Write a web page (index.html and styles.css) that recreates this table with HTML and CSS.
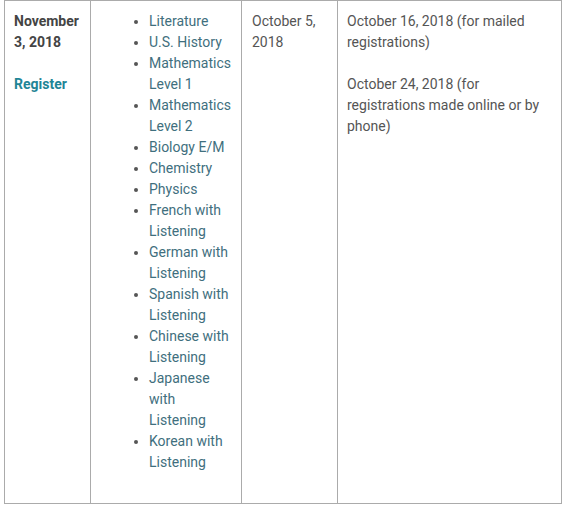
FILE: index.html
```html
<!DOCTYPE html>
<html>
<head>
<meta charset="utf-8">
<link rel="stylesheet" href="styles.css">
</head>
<body>
<table class="schedule">
  <colgroup>
    <col class="c1"><col class="c2"><col class="c3"><col class="c4">
  </colgroup>
  <tr>
    <td class="first">
      <p class="date">November 3, 2018</p>
      <p><a class="reg" href="#">Register</a></p>
    </td>
    <td>
      <ul class="tests">
        <li>Literature</li>
        <li>U.S. History</li>
        <li>Mathematics Level 1</li>
        <li>Mathematics Level 2</li>
        <li>Biology E/M</li>
        <li>Chemistry</li>
        <li>Physics</li>
        <li>French with Listening</li>
        <li>German with Listening</li>
        <li>Spanish with Listening</li>
        <li>Chinese with Listening</li>
        <li>Japanese with Listening</li>
        <li>Korean with Listening</li>
      </ul>
    </td>
    <td>
      <p>October 5, 2018</p>
    </td>
    <td class="last">
      <p>October 16, 2018 (for mailed registrations)</p>
      <p>October 24, 2018 (for registrations made online or by phone)</p>
    </td>
  </tr>
</table>
</body>
</html>
```
FILE: styles.css
```css
html, body {
  margin: 0;
  padding: 0;
  background: #fff;
}
body {
  font-family: Roboto, "Liberation Sans", sans-serif;
  font-size: 14px;
  line-height: 21px;
  color: #555;
}
.schedule {
  margin-left: 4px;
  width: 557px;
  height: 504px;
  border-collapse: collapse;
  table-layout: fixed;
}
.c1 { width: 86px; }
.c2 { width: 151px; }
.c3 { width: 96px; }
.c4 { width: 224px; }
.schedule td {
  border: 1px solid #ababab;
  vertical-align: top;
  padding: 10px 8px 10px 10px;
}
.schedule td.first {
  padding-left: 9px;
}
.schedule td.last {
  padding-left: 9px;
}
.schedule p {
  margin: 0 0 21px 0;
}
.schedule p:last-child {
  margin-bottom: 0;
}
.date {
  font-weight: 700;
  color: #444;
}
.reg {
  color: #1f8596;
  font-weight: 700;
  text-decoration: none;
}
.tests {
  margin: 0;
  padding-left: 48px;
  color: #3f6f7e;
}
.tests li::marker {
  color: #555;
}
```
